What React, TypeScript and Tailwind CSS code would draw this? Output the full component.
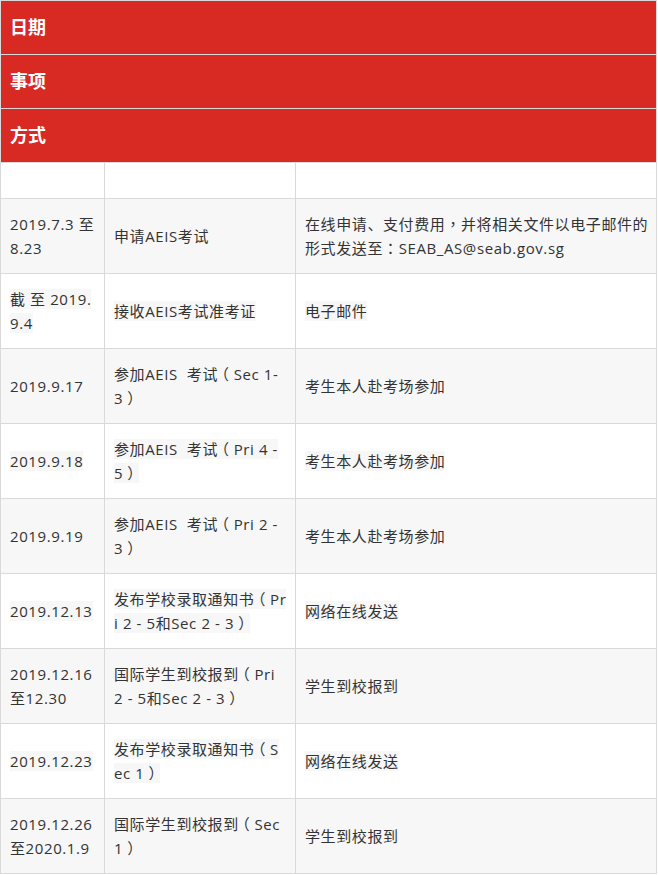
import React from "react";

const FONT = { fontFamily: '"Open Sans", "Noto Sans CJK SC", sans-serif' };

const L = () => <span className="relative -left-[4px]">（</span>;
const R = () => <span className="relative left-[4px]">）</span>;
const P = ({ c }: { c: string }) => (
  <span style={{ fontFamily: '"Noto Sans CJK TC", sans-serif' }}>{c}</span>
);

type Row = {
  a: React.ReactNode[];
  b: React.ReactNode[];
  c: React.ReactNode[];
  gray: boolean;
};

const rows: Row[] = [
  {
    gray: true,
    a: ["2019.7.3 至", "8.23"],
    b: ["申请AEIS考试"],
    c: [
      <>在线申请、支付费用<P c="，" />并将相关文件以电子邮件的</>,
      <>形式发送至<P c="：" />SEAB_AS@seab.gov.sg</>,
    ],
  },
  { gray: false, a: ["截 至 2019.", "9.4"], b: ["接收AEIS考试准考证"], c: ["电子邮件"] },
  {
    gray: true,
    a: ["2019.9.17"],
    b: [<>参加AEIS&nbsp; 考试<L />Sec 1-</>, <>3<R /></>],
    c: ["考生本人赴考场参加"],
  },
  {
    gray: false,
    a: ["2019.9.18"],
    b: [<>参加AEIS&nbsp; 考试<L />Pri 4 -</>, <>5<R /></>],
    c: ["考生本人赴考场参加"],
  },
  {
    gray: true,
    a: ["2019.9.19"],
    b: [<>参加AEIS&nbsp; 考试<L />Pri 2 -</>, <>3<R /></>],
    c: ["考生本人赴考场参加"],
  },
  {
    gray: false,
    a: ["2019.12.13"],
    b: [<>发布学校录取通知书<L />Pr</>, <>i 2 - 5和Sec 2 - 3<R /></>],
    c: ["网络在线发送"],
  },
  {
    gray: true,
    a: ["2019.12.16", "至12.30"],
    b: [<>国际学生到校报到<L />Pri</>, <>2 - 5和Sec 2 - 3<R /></>],
    c: ["学生到校报到"],
  },
  {
    gray: false,
    a: ["2019.12.23"],
    b: [<>发布学校录取通知书<L />S</>, <>ec 1<R /></>],
    c: ["网络在线发送"],
  },
  {
    gray: true,
    a: ["2019.12.26", "至2020.1.9"],
    b: [<>国际学生到校报到<L />Sec</>, <>1<R /></>],
    c: ["学生到校报到"],
  },
];

function Cell({ lines, gray }: { lines: React.ReactNode[]; gray: boolean }) {
  return (
    <div
      className={`flex h-[74px] items-center pl-[9px] pr-[6px] ${gray ? "bg-[#f7f7f7]" : "bg-white"}`}
    >
      <div className="whitespace-nowrap text-[15px] leading-[24px] tracking-[0.6px] text-[#333]">
        {lines.map((l, i) => (
          <div key={i}>
            <span className="bg-[#f7f7f7]">{l}</span>
          </div>
        ))}
      </div>
    </div>
  );
}

export default function App() {
  const heads = ["日期", "事项", "方式"];
  return (
    <div className="w-[657px] bg-white" style={FONT}>
      <div className="grid grid-cols-[103px_190px_360px] gap-px bg-[#d9d9d9] p-px">
        {heads.map((h) => (
          <div
            key={h}
            className="col-span-3 flex h-[53px] items-center bg-[#d92923] pl-[9px] text-[18px] font-bold text-white"
          >
            {h}
          </div>
        ))}
        <div className="h-[35px] bg-white" />
        <div className="h-[35px] bg-white" />
        <div className="h-[35px] bg-white" />
        {rows.map((r, i) => (
          <React.Fragment key={i}>
            <Cell lines={r.a} gray={r.gray} />
            <Cell lines={r.b} gray={r.gray} />
            <Cell lines={r.c} gray={r.gray} />
          </React.Fragment>
        ))}
      </div>
    </div>
  );
}
